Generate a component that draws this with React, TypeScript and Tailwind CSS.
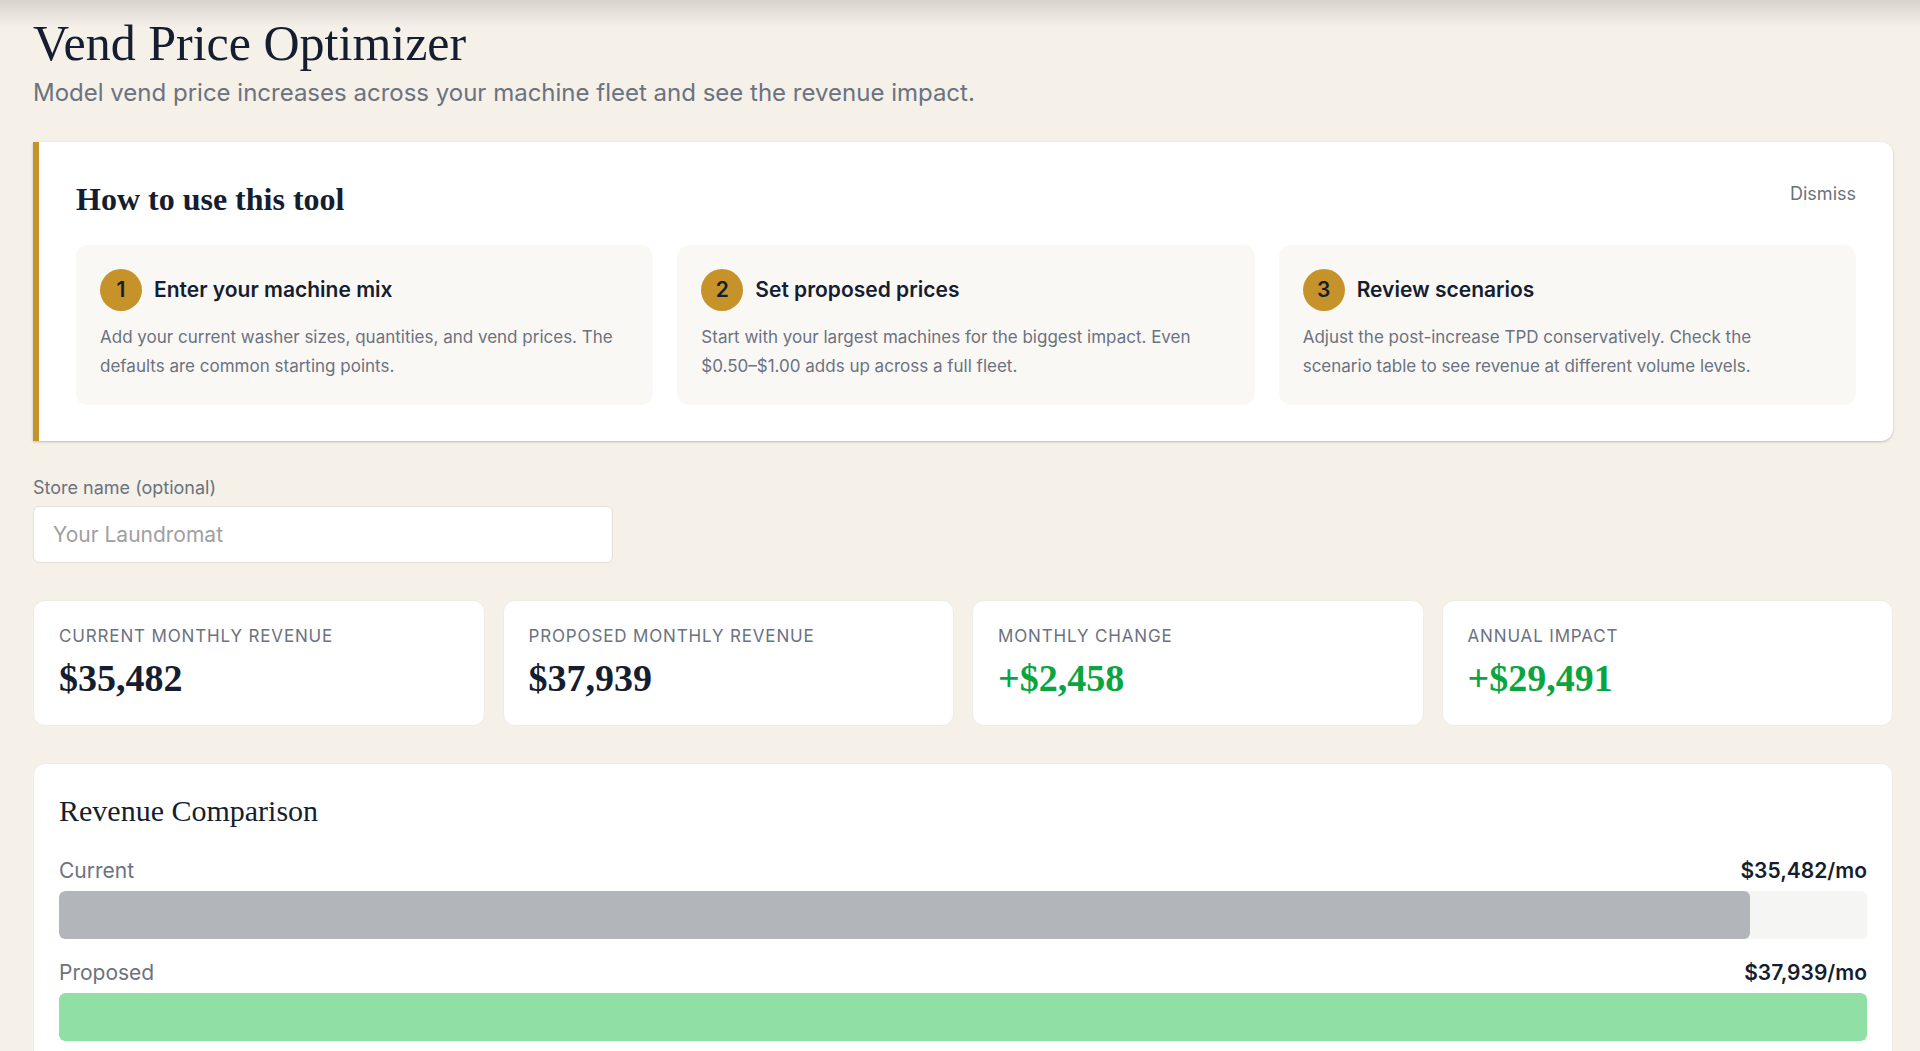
import { useState } from 'react';

interface Step {
  title: string;
  description: string;
}

interface Metric {
  label: string;
  value: string;
  positive?: boolean;
}

const steps: Step[] = [
  {
    title: 'Enter your machine mix',
    description:
      'Add your current washer sizes, quantities, and vend prices. The defaults are common starting points.',
  },
  {
    title: 'Set proposed prices',
    description:
      'Start with your largest machines for the biggest impact. Even $0.50–$1.00 adds up across a full fleet.',
  },
  {
    title: 'Review scenarios',
    description:
      'Adjust the post-increase TPD conservatively. Check the scenario table to see revenue at different volume levels.',
  },
];

const metrics: Metric[] = [
  { label: 'Current Monthly Revenue', value: '$35,482' },
  { label: 'Proposed Monthly Revenue', value: '$37,939' },
  { label: 'Monthly Change', value: '+$2,458', positive: true },
  { label: 'Annual Impact', value: '+$29,491', positive: true },
];

const bars = [
  { label: 'Current', amount: 35482, color: 'bg-[#b2b5ba]' },
  { label: 'Proposed', amount: 37939, color: 'bg-[#90e0a6]' },
];

const maxAmount = Math.max(...bars.map((bar) => bar.amount));

function HowToCard({ onDismiss }: { onDismiss: () => void }) {
  return (
    <section className="mt-[31px] rounded-r-xl border-l-6 border-[#c6932a] bg-white px-[37px] pt-[37px] pb-9 shadow-[0_1px_3px_rgba(0,0,0,0.12),0_1px_2px_rgba(0,0,0,0.1)]">
      <div className="flex items-start justify-between">
        <h2 className="font-['Liberation_Serif',serif] text-[32px] leading-10 font-bold">
          How to use this tool
        </h2>
        <button type="button" onClick={onDismiss} className="text-lg leading-[30px] text-[#6b7280]">
          Dismiss
        </button>
      </div>
      <ol className="mt-[26px] grid grid-cols-3 gap-6">
        {steps.map((step, index) => (
          <li key={step.title} className="rounded-xl bg-[#faf8f5] p-6">
            <div className="flex items-center gap-3">
              <span className="flex size-[42px] shrink-0 items-center justify-center rounded-full bg-[#c6932a] text-[21px] font-semibold">
                {index + 1}
              </span>
              <h3 className="text-[21px] font-semibold">{step.title}</h3>
            </div>
            <p className="mt-3 pr-3 text-[17px] leading-[29px] text-[#6b7280]">
              {step.description}
            </p>
          </li>
        ))}
      </ol>
    </section>
  );
}

export default function App() {
  const [showHelp, setShowHelp] = useState(true);
  const [storeName, setStoreName] = useState('');

  return (
    <div className="min-h-screen bg-[#f5f0e8] font-['Inter',sans-serif] text-[#151e30]">
      <div className="pointer-events-none absolute inset-x-0 top-0 h-7 bg-linear-to-b from-black/12 to-transparent" />
      <main className="pt-[13px] pr-[27px] pb-9 pl-[33px]">
        <h1 className="font-['Liberation_Serif',serif] text-[50px] leading-[60px]">
          Vend Price Optimizer
        </h1>
        <p className="mt-0.5 text-2xl leading-9 text-[#6b7280]">
          Model vend price increases across your machine fleet and see the revenue impact.
        </p>

        {showHelp && <HowToCard onDismiss={() => setShowHelp(false)} />}

        <div className="mt-[33px] flex max-w-[580px] flex-col gap-1">
          <label htmlFor="store-name" className="text-lg leading-7 text-[#6b7280]">
            Store name (optional)
          </label>
          <input
            id="store-name"
            type="text"
            value={storeName}
            onChange={(e) => setStoreName(e.target.value)}
            placeholder="Your Laundromat"
            className="h-[57px] rounded-md border border-[#e5e0d5] bg-white px-[19px] text-[21px] placeholder:text-[#a0a0a0]"
          />
        </div>

        <div className="mt-[37px] grid grid-cols-4 gap-[18px]">
          {metrics.map((metric) => (
            <div
              key={metric.label}
              className="rounded-xl border border-[#efece6] bg-white px-[25px] pt-[21px] pb-[25px]"
            >
              <div className="text-[17px] leading-7 tracking-wider text-[#6b7280] uppercase">
                {metric.label}
              </div>
              <div
                className={`mt-1.5 font-['Liberation_Serif',serif] text-[38px] leading-11 font-bold ${
                  metric.positive ? 'text-[#0aa53f]' : ''
                }`}
              >
                {metric.value}
              </div>
            </div>
          ))}
        </div>

        <section className="mt-[37px] rounded-xl border border-[#efece6] bg-white px-[25px] py-[27px]">
          <h2 className="font-['Liberation_Serif',serif] text-[30px] leading-10">
            Revenue Comparison
          </h2>
          <div className="mt-6 flex flex-col gap-[18px]">
            {bars.map((bar) => (
              <div key={bar.label}>
                <div className="flex justify-between text-[21px] leading-8">
                  <span className="text-[#6b7280]">{bar.label}</span>
                  <span className="font-semibold">${bar.amount.toLocaleString('en-US')}/mo</span>
                </div>
                <div className="mt-1 h-12 overflow-hidden rounded-md bg-[#f5f5f4]">
                  <div
                    className={`h-full rounded-md ${bar.color}`}
                    style={{ width: `${(bar.amount / maxAmount) * 100}%` }}
                  />
                </div>
              </div>
            ))}
          </div>
        </section>
      </main>
    </div>
  );
}
